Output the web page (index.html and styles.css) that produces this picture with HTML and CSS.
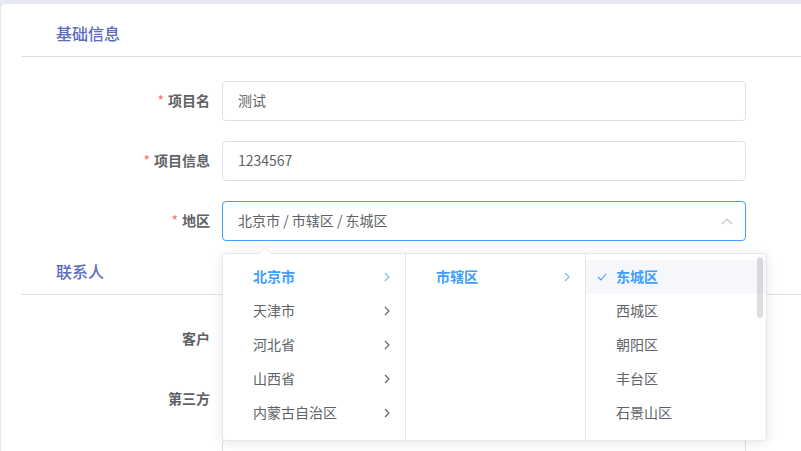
FILE: index.html
```html
<!DOCTYPE html>
<html lang="zh-CN">
<head>
<meta charset="utf-8">
<title>项目</title>
<link rel="stylesheet" href="styles.css">
</head>
<body>
<div class="page">
  <div class="card">
    <div class="section-title">基础信息</div>
    <div class="section-body">
      <div class="form-item">
        <label class="label"><span class="req">*</span>项目名</label>
        <div class="input">测试</div>
      </div>
      <div class="form-item">
        <label class="label"><span class="req">*</span>项目信息</label>
        <div class="input">1234567</div>
      </div>
      <div class="form-item">
        <label class="label"><span class="req">*</span>地区</label>
        <div class="cascader">
          <div class="input is-focus">北京市 / 市辖区 / 东城区
            <svg class="caret" width="12" height="8" viewBox="0 0 12 8"><polyline points="1,7 6,2 11,7" fill="none" stroke="#c0c4cc" stroke-width="1.2"/></svg>
          </div>
          <div class="dropdown">
            <div class="popper-arrow"></div>
            <div class="menu">
              <div class="node active"><span>北京市</span><svg class="arr" width="6" height="10" viewBox="0 0 6 10"><polyline points="1,1 5,5 1,9" fill="none" stroke="currentColor" stroke-width="1.1"/></svg></div>
              <div class="node"><span>天津市</span><svg class="arr" width="6" height="10" viewBox="0 0 6 10"><polyline points="1,1 5,5 1,9" fill="none" stroke="currentColor" stroke-width="1.1"/></svg></div>
              <div class="node"><span>河北省</span><svg class="arr" width="6" height="10" viewBox="0 0 6 10"><polyline points="1,1 5,5 1,9" fill="none" stroke="currentColor" stroke-width="1.1"/></svg></div>
              <div class="node"><span>山西省</span><svg class="arr" width="6" height="10" viewBox="0 0 6 10"><polyline points="1,1 5,5 1,9" fill="none" stroke="currentColor" stroke-width="1.1"/></svg></div>
              <div class="node"><span>内蒙古自治区</span><svg class="arr" width="6" height="10" viewBox="0 0 6 10"><polyline points="1,1 5,5 1,9" fill="none" stroke="currentColor" stroke-width="1.1"/></svg></div>
            </div>
            <div class="menu menu-2">
              <div class="node active"><span>市辖区</span><svg class="arr" width="6" height="10" viewBox="0 0 6 10"><polyline points="1,1 5,5 1,9" fill="none" stroke="currentColor" stroke-width="1.1"/></svg></div>
            </div>
            <div class="menu menu-3">
              <div class="node active hover"><svg class="check" width="10" height="8" viewBox="0 0 10 8"><polyline points="1,4 4,7 9,1" fill="none" stroke="#409eff" stroke-width="1.1"/></svg><span>东城区</span></div>
              <div class="node"><span>西城区</span></div>
              <div class="node"><span>朝阳区</span></div>
              <div class="node"><span>丰台区</span></div>
              <div class="node"><span>石景山区</span></div>
              <div class="scrollbar"></div>
            </div>
          </div>
        </div>
      </div>
    </div>
    <div class="section-title">联系人</div>
    <div class="section-body">
      <div class="form-item">
        <label class="label">客户</label>
        <div class="input"></div>
      </div>
      <div class="form-item">
        <label class="label">第三方</label>
        <div class="input"></div>
      </div>
      <div class="form-item">
        <label class="label"></label>
        <div class="input"></div>
      </div>
    </div>
  </div>
</div>
</body>
</html>
```
FILE: styles.css
```css
* { box-sizing: border-box; }
html, body { margin: 0; height: 451px; overflow: hidden; }
body {
  background: #e6e9ee;
  font-family: "Noto Sans CJK SC", "Liberation Sans", sans-serif;
  font-size: 14px;
  color: #606266;
}
.page { padding: 4px 0 0 1px; }
.card {
  background: #fff;
  border-radius: 4px 0 0 0;
  padding: 19px 0 0 20px;
  height: 447px;
  overflow: hidden;
}
.section-title {
  font-size: 16px;
  line-height: 18px;
  font-weight: 500;
  color: #5b6bbd;
  padding: 1px 0 14px 35px;
  border-bottom: 1px solid #dcdfe6;
}
.section-body { padding-top: 24px; }
.form-item {
  display: flex;
  height: 40px;
  margin-bottom: 20px;
}
.label {
  width: 201px;
  padding-right: 12px;
  text-align: right;
  line-height: 38px;
  font-weight: 700;
  color: #606266;
}
.req { color: #f56c6c; margin-right: 4px; font-weight: 400; }
.input {
  width: 524px;
  height: 40px;
  border: 1px solid #dcdfe6;
  border-radius: 4px;
  padding: 0 15px;
  line-height: 36px;
  color: #606266;
  background: #fff;
}
.cascader { position: relative; }
.input.is-focus { border-color: #409eff; position: relative; }
.caret { position: absolute; right: 12px; top: 15px; }
.dropdown {
  position: absolute;
  left: 0;
  top: 52px;
  width: 545px;
  height: 188px;
  background: #fff;
  border: 1px solid #e4e7ed;
  border-radius: 4px;
  box-shadow: 0 2px 12px rgba(0, 0, 0, 0.1);
  display: flex;
  z-index: 10;
}
.popper-arrow {
  position: absolute;
  left: 36px;
  top: -7px;
  width: 0; height: 0;
  border-left: 6px solid transparent;
  border-right: 6px solid transparent;
  border-bottom: 6px solid #e4e7ed;
}
.popper-arrow::after {
  content: "";
  position: absolute;
  left: -6px;
  top: 1px;
  border-left: 6px solid transparent;
  border-right: 6px solid transparent;
  border-bottom: 6px solid #fff;
}
.menu {
  width: 183px;
  padding: 6px 0;
  border-right: 1px solid #e4e7ed;
  overflow: hidden;
  position: relative;
}
.menu-2 { width: 180px; }
.menu-3 { flex: 1; border-right: 0; }
.node {
  height: 34px;
  display: flex;
  align-items: center;
  padding: 0 15px 2px 30px;
  position: relative;
  color: #606266;
}
.node span { flex: 1; }
.node .arr { color: #606266; margin-top: 2px; }
.node.active { color: #409eff; font-weight: 700; }
.node.active .arr { color: #79b5f7; }
.node.hover { background: #f5f7fa; }
.check { position: absolute; left: 11px; top: 13px; }
.scrollbar {
  position: absolute;
  right: 3px;
  top: 3px;
  width: 6px;
  height: 61px;
  border-radius: 3px;
  background: rgba(144, 147, 153, 0.3);
}
```
